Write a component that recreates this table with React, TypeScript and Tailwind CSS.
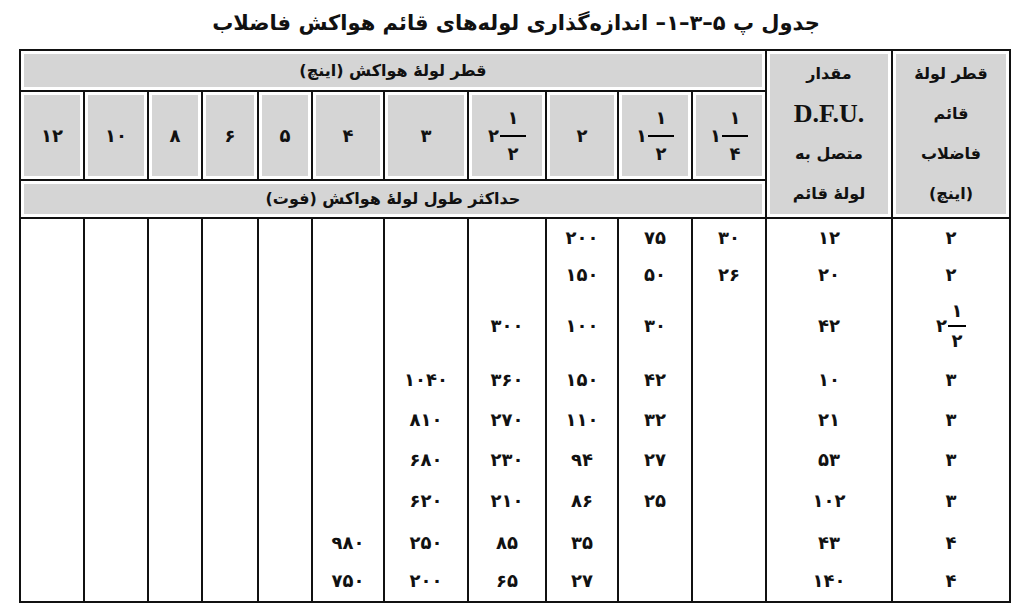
import React from "react"

const cols = [118, 126, 74, 74, 72, 78, 84, 72, 54, 56, 54, 64, 64]

type Cell = string | { w: string; n: string; d: string } | null

// row heights and small vertical nudges so the figures sit where the printed table has them
const rows: { h: number; pad: string; cells: Cell[] }[] = [
    { h: 37, pad: "", cells: ["۲", "۱۲", "۳۰", "۷۵", "۲۰۰"] },
    { h: 44, pad: "pb-[6px]", cells: ["۲", "۲۰", "۲۶", "۵۰", "۱۵۰"] },
    { h: 53, pad: "", cells: [{ w: "۲", n: "۱", d: "۲" }, "۴۲", null, "۳۰", "۱۰۰", "۳۰۰"] },
    { h: 47, pad: "pt-[8px]", cells: ["۳", "۱۰", null, "۴۲", "۱۵۰", "۳۶۰", "۱۰۴۰"] },
    { h: 40, pad: "", cells: ["۳", "۲۱", null, "۳۲", "۱۱۰", "۲۷۰", "۸۱۰"] },
    { h: 41, pad: "", cells: ["۳", "۵۳", null, "۲۷", "۹۴", "۲۳۰", "۶۸۰"] },
    { h: 41, pad: "", cells: ["۳", "۱۰۲", null, "۲۵", "۸۶", "۲۱۰", "۶۲۰"] },
    { h: 39, pad: "pt-[3px]", cells: ["۴", "۴۳", null, null, "۳۵", "۸۵", "۲۵۰", "۹۸۰"] },
    { h: 42, pad: "pb-[1px]", cells: ["۴", "۱۴۰", null, null, "۲۷", "۶۵", "۲۰۰", "۷۵۰"] },
]

function Mixed({ w, n, d, bar, gap }: { w: string; n: string; d: string; bar: string; gap: string }) {
    return (
        <span dir="ltr" className="inline-flex items-center gap-[1px] align-middle">
            <span className="leading-none">{w}</span>
            <span className="inline-flex flex-col items-center leading-none">
                <span>{n}</span>
                <span className={`h-[2px] bg-black ${bar} ${gap}`} />
                <span>{d}</span>
            </span>
        </span>
    )
}

function show(c: Cell, bar: string, gap: string) {
    if (c === null) return null
    if (typeof c === "string") return c
    return <Mixed w={c.w} n={c.n} d={c.d} bar={bar} gap={gap} />
}

const head = "border-2 border-[#111] p-[3px] bg-[#d5d5d5] bg-clip-content text-center align-middle"

export default function App() {
    const sizes = [
        { w: "۱", n: "۱", d: "۴" },
        { w: "۱", n: "۱", d: "۲" },
        "۲",
        { w: "۲", n: "۱", d: "۲" },
        "۳",
        "۴",
        "۵",
        "۶",
        "۸",
        "۱۰",
        "۱۲",
    ] as Cell[]

    return (
        <div
            dir="rtl"
            className="w-[1032px] h-[616px] bg-white text-[#111] font-['DejaVu_Sans',sans-serif] font-bold overflow-hidden"
        >
            <div className="h-[49px] flex items-center justify-center text-[21px] pb-[2px]">
                جدول پ ۵–۳–۱– اندازه‌گذاری لوله‌های قائم هواکش فاضلاب
            </div>

            <table className="mr-[21px] w-[990px] table-fixed border-collapse border-2 border-[#111]">
                <colgroup>
                    {cols.map((w, i) => (
                        <col key={i} style={{ width: w }} />
                    ))}
                </colgroup>
                <thead>
                    <tr className="h-[41px]">
                        <th rowSpan={3} className={`${head} text-[16px] leading-[40px] font-bold`}>
                            <div>قطر لولهٔ</div>
                            <div>قائم</div>
                            <div>فاضلاب</div>
                            <div>(اینچ)</div>
                        </th>
                        <th rowSpan={3} className={`${head} text-[16px] leading-[40px] font-bold`}>
                            <div>مقدار</div>
                            <div dir="ltr" className="font-['Liberation_Serif',serif] text-[26px]">
                                D.F.U.
                            </div>
                            <div>متصل به</div>
                            <div>لولهٔ قائم</div>
                        </th>
                        <th colSpan={11} className={`${head} text-[16px] font-bold`}>
                            قطر لولهٔ هواکش (اینچ)
                        </th>
                    </tr>
                    <tr className="h-[87px]">
                        {sizes.map((s, i) => (
                            <th key={i} className={`${head} text-[18px] font-bold`}>
                                {show(s, "w-[26px]", "my-[8px]")}
                            </th>
                        ))}
                    </tr>
                    <tr className="h-[38px]">
                        <th colSpan={11} className={`${head} text-[16px] font-bold`}>
                            حداکثر طول لولهٔ هواکش (فوت)
                        </th>
                    </tr>
                </thead>
                <tbody>
                    {rows.map((r, ri) => (
                        <tr key={ri} style={{ height: r.h }}>
                            {cols.map((_, ci) => (
                                <td
                                    key={ci}
                                    className={`border-x-2 border-[#111] text-center align-middle text-[18px] p-0 ${r.pad}`}
                                >
                                    {show(r.cells[ci] ?? null, "w-[18px]", "my-[5px]")}
                                </td>
                            ))}
                        </tr>
                    ))}
                </tbody>
            </table>
        </div>
    )
}
